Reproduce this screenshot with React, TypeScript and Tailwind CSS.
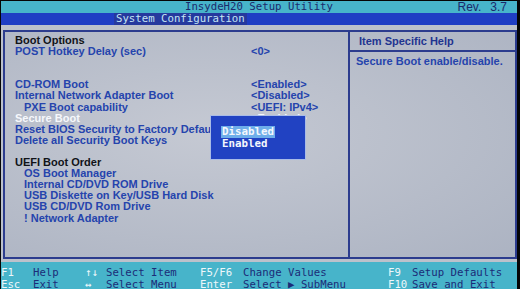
import React from "react";

type Row = {
  label?: string;
  value?: string;
  head?: boolean;
  indent?: boolean;
  selected?: boolean;
};

const rows: Row[] = [
  { label: "Boot Options", head: true },
  { label: "POST Hotkey Delay (sec)", value: "<0>" },
  {},
  {},
  { label: "CD-ROM Boot", value: "<Enabled>" },
  { label: "Internal Network Adapter Boot", value: "<Disabled>" },
  { label: "PXE Boot capability", value: "<UEFI: IPv4>", indent: true },
  { label: "Secure Boot", value: "<Enabled>", selected: true },
  { label: "Reset BIOS Security to Factory Default" },
  { label: "Delete all Security Boot Keys" },
  {},
  { label: "UEFI Boot Order", head: true },
  { label: "OS Boot Manager", indent: true },
  { label: "Internal CD/DVD ROM Drive", indent: true },
  { label: "USB Diskette on Key/USB Hard Disk", indent: true },
  { label: "USB CD/DVD Rom Drive", indent: true },
  { label: "! Network Adapter", indent: true },
];

const keys = [
  ["F1", "Help", "↑↓", "Select Item", "F5/F6", "Change Values", "F9", "Setup Defaults"],
  ["Esc", "Exit", "↔", "Select Menu", "Enter", "Select ▶ SubMenu", "F10", "Save and Exit"],
];

// column widths of the help bar, key / description pairs
const widths = ["w-[32px]", "w-[52px]", "w-[21px]", "w-[94px]", "w-[43px]", "w-[145px]", "w-[24px]", "w-[100px]"];

function ItemRow({ row }: { row: Row }) {
  if (!row.label) return <div className="h-[11.1px]" />;
  const color = row.head ? "text-[#111318]" : row.selected ? "text-[#f6f8fc]" : "text-[#2544ad]";
  return (
    <div className={`flex h-[11.1px] whitespace-nowrap ${color}`}>
      <span className={row.indent ? "w-[236px] pl-[9px]" : "w-[236px]"}>{row.label}</span>
      {row.value && <span>{row.value}</span>}
    </div>
  );
}

export default function App() {
  return (
    <div className="w-[520px] h-[289px] bg-[#050505] overflow-hidden pt-[1px] pl-[1px] pr-[3px]">
      {/* title bar */}
      <div className="flex h-[12px] items-center bg-[#47b4ca] text-[#1b2a6c] font-['DejaVu_Sans_Mono',monospace] text-[10.7px] leading-[12px]">
        <span className="pl-[184px] whitespace-pre">InsydeH20 Setup Utility</span>
        <span className="ml-auto pr-[10px] flex gap-[9px] font-['Liberation_Sans',Arial,sans-serif] text-[12px]">
          <span>Rev.</span>
          <span>3.7</span>
        </span>
      </div>

      {/* menu bar */}
      <div className="flex h-[12px] bg-[#1f3ec4] font-['DejaVu_Sans_Mono',monospace] text-[10.7px] leading-[12px]">
        <span className="ml-[113px] px-[2px] bg-[#26399e] text-[#c4e4f4] whitespace-pre">System Configuration</span>
      </div>

      {/* main area */}
      <div className="h-[237px] bg-[#bcc1cb] pl-[2px] pt-[5px]">
        <div className="relative flex h-[229px] border-2 border-[#2c3c8e] bg-[radial-gradient(ellipse_at_40%_45%,#c5c9d3,#acb3c2)] font-['Liberation_Sans',Arial,sans-serif] text-[11px] font-bold leading-[11.1px]">
          <div className="w-[343px] pl-[10px] pt-[3px]">
            {rows.map((r, i) => (
              <ItemRow key={i} row={r} />
            ))}
          </div>
          <div className="flex-1 border-l-2 border-[#2c3c8e]">
            <div className="h-[20px] pl-[9px] pt-[4px] border-b-2 border-[#2c3c8e] text-[#1f3490]">
              Item Specific Help
            </div>
            <div className="pl-[6px] pt-[4px] text-[#2544ad]">Secure Boot enable/disable.</div>
          </div>

          {/* option popup */}
          <div className="absolute left-[205px] top-[83px] w-[96px] h-[45px] bg-[#2142c2] border border-[#a9bbe6] pl-[10px] pt-[10px] font-['DejaVu_Sans_Mono',monospace] text-[10.8px] leading-[12px] text-[#f4f7fc]">
            <div className="w-fit bg-[#6eaeea] px-[1px]">Disabled</div>
            <div className="px-[1px]">Enabled</div>
          </div>
        </div>
      </div>

      {/* help bar */}
      <div className="h-[30px] bg-[#47b4ca] pt-[5px] font-['DejaVu_Sans_Mono',monospace] text-[10.7px] leading-[12px]">
        {keys.map((line, i) => (
          <div key={i} className="flex whitespace-pre">
            {line.map((t, j) => (
              <span
                key={j}
                className={`${widths[j]} shrink-0 ${j % 2 === 0 ? "text-[#eef7fa]" : "text-[#1c2c78]"}`}
              >
                {t}
              </span>
            ))}
          </div>
        ))}
      </div>
    </div>
  );
}
